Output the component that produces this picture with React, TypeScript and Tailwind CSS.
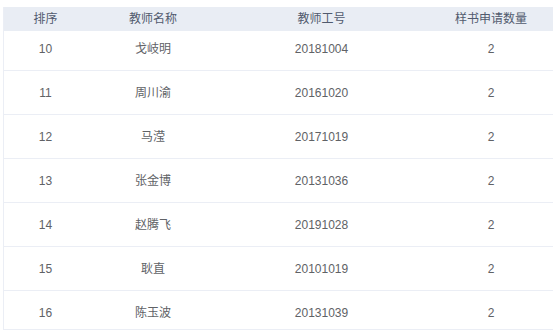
import React from "react";

const rows = [
  ["10", "戈岐明", "20181004", "2"],
  ["11", "周川渝", "20161020", "2"],
  ["12", "马滢", "20171019", "2"],
  ["13", "张金博", "20131036", "2"],
  ["14", "赵腾飞", "20191028", "2"],
  ["15", "耿直", "20101019", "2"],
  ["16", "陈玉波", "20131039", "2"],
];

const cols = ["w-[83px]", "w-[132px]", "w-[205px]", "w-[134px]"];

export default function App() {
  return (
    <div
      className="w-[553px] h-[335px] overflow-hidden bg-white pt-[7px] pl-[3px]"
      style={{ fontFamily: '"Liberation Sans", "Noto Sans CJK SC", sans-serif' }}
    >
      <div className="w-[554px] h-[323px] flex flex-col border-l border-b border-[#ebeef5] overflow-hidden">
        <div className="relative z-10 flex h-[24px] shrink-0 bg-[#e9edf4] text-[12px] text-[#515a6e]">
          {["排序", "教师名称", "教师工号", "样书申请数量"].map((h, i) => (
            <div key={h} className={`${cols[i]} shrink-0 flex items-center justify-center`}>
              {h}
            </div>
          ))}
        </div>
        <div className="-mt-[4px] flex flex-col">
          {rows.map((r) => (
            <div key={r[0]} className="flex h-[44px] shrink-0 border-b border-[#ebeef5] text-[12px] text-[#606266]">
              {r.map((c, i) => (
                <div key={i} className={`${cols[i]} shrink-0 flex items-center justify-center`}>
                  {c}
                </div>
              ))}
            </div>
          ))}
        </div>
      </div>
    </div>
  );
}
